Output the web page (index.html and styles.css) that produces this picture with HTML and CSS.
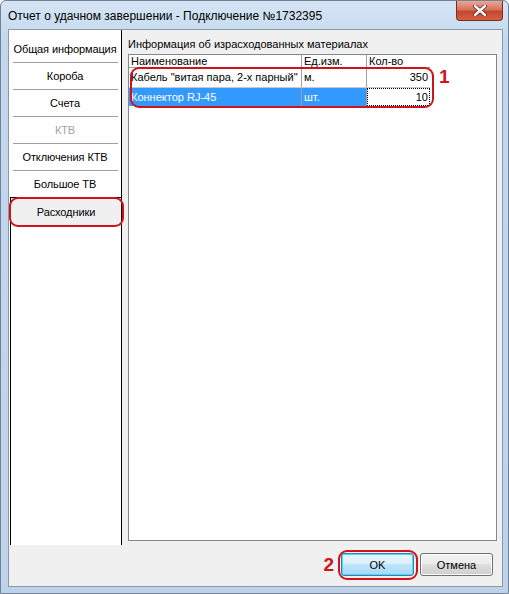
FILE: index.html
```html
<!DOCTYPE html>
<html lang="ru">
<head>
  <meta charset="UTF-8">
  <title>Отчет о удачном завершении</title>
  <link rel="stylesheet" href="styles.css">
</head>
<body>
  <div class="window">
    <div class="titlebar">
      <span class="title">Отчет о удачном завершении - Подключение №1732395</span>
      <div class="close-btn">
        <svg width="14" height="11" viewBox="0 0 14 11">
          <path d="M2 1 L12 10 M12 1 L2 10" stroke="#5a1d14" stroke-width="4" stroke-linecap="round"/>
          <path d="M2 1 L12 10 M12 1 L2 10" stroke="#ffffff" stroke-width="2.4" stroke-linecap="round"/>
        </svg>
      </div>
    </div>

    <div class="client">
      <div class="main">
        <div class="nav">
          <div class="nav-item">Общая информация</div>
          <div class="nav-sep"></div>
          <div class="nav-item">Короба</div>
          <div class="nav-sep"></div>
          <div class="nav-item">Счета</div>
          <div class="nav-sep"></div>
          <div class="nav-item disabled">КТВ</div>
          <div class="nav-sep"></div>
          <div class="nav-item">Отключения КТВ</div>
          <div class="nav-sep"></div>
          <div class="nav-item">Большое ТВ</div>
          <div class="nav-item selected">Расходники</div>
          <div class="nav-rest"></div>
        </div>

        <div class="content">
          <div class="group-label">Информация об израсходованных материалах</div>
          <div class="list-box">
            <div class="grid">
              <div class="row head">
                <div class="cell c-name">Наименование</div>
                <div class="cell c-unit">Ед.изм.</div>
                <div class="cell c-qty">Кол-во</div>
              </div>
              <div class="row">
                <div class="cell c-name">Кабель "витая пара, 2-х парный"</div>
                <div class="cell c-unit">м.</div>
                <div class="cell c-qty num">350</div>
              </div>
              <div class="row active">
                <div class="cell c-name">Коннектор RJ-45</div>
                <div class="cell c-unit">шт.</div>
                <div class="cell c-qty num editing">10</div>
              </div>
            </div>
            <div class="mark-box"></div>
            <div class="mark-num mark-1">1</div>
          </div>
        </div>
      </div>

      <div class="footer">
        <span class="mark-num mark-2">2</span>
        <button class="btn default">OK</button>
        <button class="btn">Отмена</button>
      </div>
    </div>
  </div>
</body>
</html>
```

FILE: styles.css
```css
body {
  margin: 0;
  width: 509px;
  height: 594px;
  overflow: hidden;
  font-family: "Liberation Sans", Arial, sans-serif;
  font-size: 11px;
  color: #000;
  background: #fff;
}
.window {
  box-sizing: border-box;
  height: 594px;
  border: 1px solid #6f8296;
  border-radius: 6px 6px 0 0;
  background: linear-gradient(#d6e5f5, #c3d8ee 40px, #bcd3ea);
  display: flex;
  flex-direction: column;
}
.titlebar {
  height: 28px;
  display: flex;
  justify-content: space-between;
  align-items: flex-start;
  padding-left: 7px;
}
.title {
  font-size: 12px;
  margin-top: 8px;
  color: #000;
}
.close-btn {
  width: 45px;
  height: 19px;
  margin-right: 5px;
  border: 1px solid #7a2e23;
  border-top: none;
  border-radius: 0 0 4px 4px;
  background: linear-gradient(#e9a899, #d6725d 45%, #c4472e 55%, #d8613f);
  display: flex;
  align-items: center;
  justify-content: center;
}
.client {
  flex: 1;
  margin: 0 5px 6px 7px;
  border: 1px solid #8c9aa8;
  background: #f0f0f0;
  display: flex;
  flex-direction: column;
}
.main {
  height: 515px;
  display: flex;
}

/* left navigation column */
.nav {
  width: 113px;
  background: #fff;
  border-right: 1px solid #000;
  padding-top: 6px;
  box-sizing: border-box;
  display: flex;
  flex-direction: column;
}
.nav-item {
  height: 26px;
  line-height: 26px;
  text-align: center;
  flex-shrink: 0;
  letter-spacing: -0.1px;
}
.nav-item.disabled {
  color: #a0a0a0;
}
.nav-sep {
  height: 1px;
  margin: 0 3px 0 4px;
  background: #a0a0a0;
  flex-shrink: 0;
}
.nav-item.selected {
  position: relative;
  height: 28px;
  line-height: 28px;
  margin-left: 1px;
  border-top: 1px solid #000;
  border-left: 1px solid #000;
  background: #f0f0f0;
}
.nav-item.selected::after {
  content: "";
  position: absolute;
  left: -2px;
  right: -3px;
  top: -1px;
  bottom: -1px;
  border: 2px solid #d0121b;
  border-radius: 9px;
}
.nav-rest {
  flex: 1;
  margin-left: 1px;
  border-left: 1px solid #000;
}

/* right side */
.content {
  flex: 1;
  padding: 8px 5px 4px 6px;
  display: flex;
  flex-direction: column;
}
.group-label {
  line-height: 13px;
  margin-bottom: 3px;
}
.list-box {
  position: relative;
  flex: 1;
  background: #fff;
  border: 1px solid #828790;
}
.grid {
  width: 301px;
}
.row {
  display: flex;
  height: 19px;
  line-height: 19px;
  border-bottom: 1px solid #c8c8c8;
}
.row.head {
  height: 12px;
  line-height: 13px;
  overflow: hidden;
  border-bottom: 1px solid #a0a0a0;
}
.row.active {
  height: 18px;
  line-height: 18px;
  border-bottom: none;
}
.cell {
  box-sizing: border-box;
  padding: 0 2px 0 2px;
  white-space: nowrap;
  overflow: hidden;
}
.c-name {
  width: 173px;
  border-right: 1px solid #a0a0a0;
}
.c-unit {
  width: 65px;
  border-right: 1px solid #a0a0a0;
}
.c-qty {
  width: 63px;
}
.num {
  text-align: right;
}
.row.active .c-name,
.row.active .c-unit {
  background: #3399ff;
  color: #fff;
}
.cell.editing {
  border: 1px dotted #000;
  line-height: 16px;
  padding-right: 1px;
}

/* annotation marks */
.mark-box {
  position: absolute;
  left: 1px;
  top: 12px;
  width: 300px;
  height: 37px;
  border: 2px solid #d0121b;
  border-radius: 9px;
}
.mark-num {
  color: #d0121b;
  font-weight: bold;
  font-size: 19px;
}
.mark-1 {
  position: absolute;
  left: 310px;
  top: 11px;
}

.footer {
  flex: 1;
  display: flex;
  justify-content: flex-end;
  align-items: flex-start;
  padding: 8px 9px 0 0;
}
.mark-2 {
  line-height: 23px;
  margin-right: 7px;
}
.btn {
  position: relative;
  width: 73px;
  height: 23px;
  margin: 0 0 0 6px;
  padding: 0;
  font-family: inherit;
  font-size: 11px;
  color: #000;
  border: 1px solid #707070;
  border-radius: 3px;
  background: linear-gradient(#f2f2f2, #ebebeb 50%, #dddddd 50%, #cfcfcf);
  box-shadow: inset 0 0 0 1px #fcfcfc;
}
.btn.default {
  margin-left: 0;
  border-color: #3c7fb1;
  background: linear-gradient(#eaf6fd, #d9f0fc 50%, #bee6fd 50%, #a7d9f5);
  box-shadow: inset 0 0 0 1px #48d8fb;
}
.btn.default::after {
  content: "";
  position: absolute;
  left: -4px;
  right: -5px;
  top: -4px;
  bottom: -5px;
  border: 2px solid #d0121b;
  border-radius: 9px;
}
```
